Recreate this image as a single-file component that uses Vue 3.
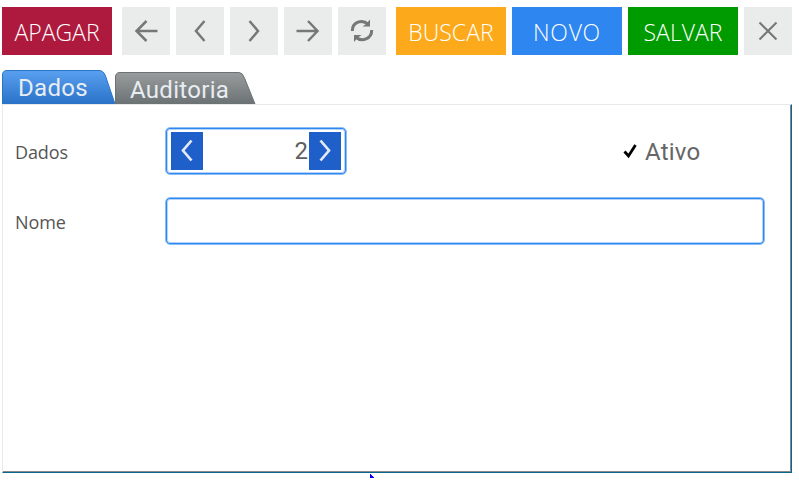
<script setup>
import { ref } from 'vue'

const code = ref(2)
const name = ref('')

const toolbar = [
  { id: 'delete', label: 'APAGAR', wide: true },
  { id: 'first', icon: 'M35.5 24H14M24.5 14L14.5 24L24.5 34', gap: true },
  { id: 'prev', icon: 'M28.5 14L20 24L28.5 34' },
  { id: 'next', icon: 'M19.5 14L28 24L19.5 34' },
  { id: 'last', icon: 'M12.5 24H34M24 14L33.5 24L24 34' },
  { id: 'refresh', refresh: true },
  { id: 'search', label: 'BUSCAR', wide: true, gap: true },
  { id: 'new', label: 'NOVO', wide: true },
  { id: 'save', label: 'SALVAR', wide: true },
  { id: 'close', icon: 'M15.5 15.5L32.5 32.5M32.5 15.5L15.5 32.5', thin: true },
]
</script>

<template>
  <main class="window">
    <nav class="toolbar">
      <button
        v-for="item in toolbar"
        :key="item.id"
        :class="['tool', item.id, { wide: item.wide, gap: item.gap, thin: item.thin }]"
      >
        <span v-if="item.label">{{ item.label }}</span>
        <svg v-else viewBox="0 0 48 48" width="48" height="48">
          <template v-if="item.refresh">
            <path d="M14.3 24C14.3 15 24 11.5 30.5 17.5M33.7 23C33.7 32 24 35.5 17.5 30" />
            <path class="solid" d="M32 12.5V19.5H24.5L28 17ZM16 35V28H23.5L20 30.5Z" />
          </template>
          <path v-else :d="item.icon" />
        </svg>
      </button>
    </nav>

    <div class="tabs">
      <div class="tab active">
        <svg width="113" height="34" viewBox="0 0 113 34">
          <defs>
            <linearGradient id="blue" x2="0" y2="1">
              <stop offset="0" stop-color="#5ba0f0" />
              <stop offset="1" stop-color="#2872c8" />
            </linearGradient>
          </defs>
          <path d="M.5 34V5Q.5 .5 5 .5H97Q101.5 .5 103.500 6L113 34Z" fill="url(#blue)" />
          <path d="M.5 34V5Q.5 .5 5 .5H97Q101.5 .5 103.500 6L113 34" fill="none" stroke="#2874c6" />
        </svg>
        <span>Dados</span>
      </div>
      <div class="tab">
        <svg width="141" height="32" viewBox="0 0 141 32">
          <defs>
            <linearGradient id="gray" x2="0" y2="1">
              <stop offset="0" stop-color="#999c9d" />
              <stop offset="1" stop-color="#6b7274" />
            </linearGradient>
          </defs>
          <path d="M.5 32V5Q.5 .5 5 .5H124Q127.5 .5 129.5 6L140 32Z" fill="url(#gray)" />
          <path d="M.5 32V5Q.5 .5 5 .5H124Q127.5 .5 129.5 6L140 32" fill="none" stroke="#6d7274" />
        </svg>
        <span>Auditoria</span>
      </div>
    </div>

    <section class="panel">
      <div class="panel-body">
        <div class="row">
          <label class="label">Dados</label>
          <div class="field stepper">
            <button class="step"><svg width="32" height="38"><path d="M20.5 8.5L12 18.5L20.5 28.5" /></svg></button>
            <span class="value">{{ code }}</span>
            <button class="step"><svg width="32" height="38"><path d="M11.5 8.5L20 18.5L11.5 28.5" /></svg></button>
          </div>
          <label class="check">
            <svg width="14" height="16"><path d="M1.5 8.5L5.5 13L12.5 2" /></svg>
            <span>Ativo</span>
          </label>
        </div>
        <div class="row">
          <label class="label">Nome</label>
          <input v-model="name" class="field name" type="text" />
        </div>
      </div>
    </section>
    <svg class="pointer" width="5" height="4" shape-rendering="crispEdges"><path d="M0 0H1V1H2V2H3V3H4V4H0Z" /></svg>
  </main>
</template>

<style>
body { background: #fff; overflow: hidden; }
</style>

<style scoped>
.window { width: 799px; height: 480px; box-sizing: border-box; padding: 7px 7px 0 2px; background: #fff; font-family: Roboto, sans-serif; overflow: hidden; }
.toolbar { display: flex; gap: 6px; height: 48px; }
button { border: 0; padding: 0; margin: 0; }
svg { display: block; }
.tool { width: 48px; height: 48px; background: #eaecec; color: #fff; font: 300 23px/48px "Open Sans", sans-serif; flex: none; }
.tool.wide { width: 110px; }
.tool.gap { margin-left: 4px; }
.tool span { display: block; white-space: nowrap; padding-top: 3px; line-height: 45px; }
.tool path { fill: none; stroke: #777; stroke-width: 2.5; }
.tool.refresh path { stroke-width: 3; }
.tool.thin path { stroke-width: 2.1; }
.tool .solid { fill: #777; stroke: none; }
.delete { background: #ae1a3e; }
.search { background: #fca91b; }
.new { background: #2e87f0; }
.save { background: #009b00; }
.new span { letter-spacing: 0.7px; }
.tabs { display: flex; align-items: flex-end; height: 34px; margin-top: 15px; }
.tab { display: grid; color: #e8edf2; font-size: 24px; line-height: 36px; letter-spacing: 0.3px; }
.tab svg, .tab span { grid-area: 1 / 1; }
.tab span { padding-left: 15px; height: 32px; }
.tab.active span { padding-left: 16px; height: 34px; }
.panel { width: 790px; height: 369px; box-sizing: border-box; border: 1px solid #e8e9e9; border-right-color: #086790; border-bottom-color: #086790; }
.panel-body { height: 367px; box-sizing: border-box; border-right: 1px solid #888; border-bottom: 1px solid #888; padding: 22px 0 0 12px; }
.row { display: flex; align-items: center; height: 48px; margin-bottom: 22px; }
.label { width: 150px; color: #555; font: 400 18px/24px "Open Sans", sans-serif; letter-spacing: -0.1px; padding-top: 1px; }
.field { box-sizing: border-box; height: 48px; border: 1px solid #8dbdf7; box-shadow: inset 0 0 0 1px #2e87f0, inset 0 0 0 2px #b5d4fa; border-radius: 5px; background: #fff; }
.stepper { display: flex; align-items: center; width: 182px; padding: 0 5px; }
.step { width: 32px; height: 38px; background: #1f5fc9; }
.step path { fill: none; stroke: #e4eaf5; stroke-width: 2.7; }
.value { flex: 1; text-align: right; color: #606060; font-size: 24px; padding-right: 1px; }
.name { width: 600px; padding: 0 9px; outline: 0; font: 24px Roboto, sans-serif; }
.check { display: flex; align-items: center; gap: 8px; margin-left: 276px; color: #666; font-size: 24px; }
.check span { padding-top: 2px; letter-spacing: 0.2px; }
.check path { fill: none; stroke: #000; stroke-width: 2.8; }
.pointer { margin: 1px 0 0 368px; fill: #00f; }
</style>
